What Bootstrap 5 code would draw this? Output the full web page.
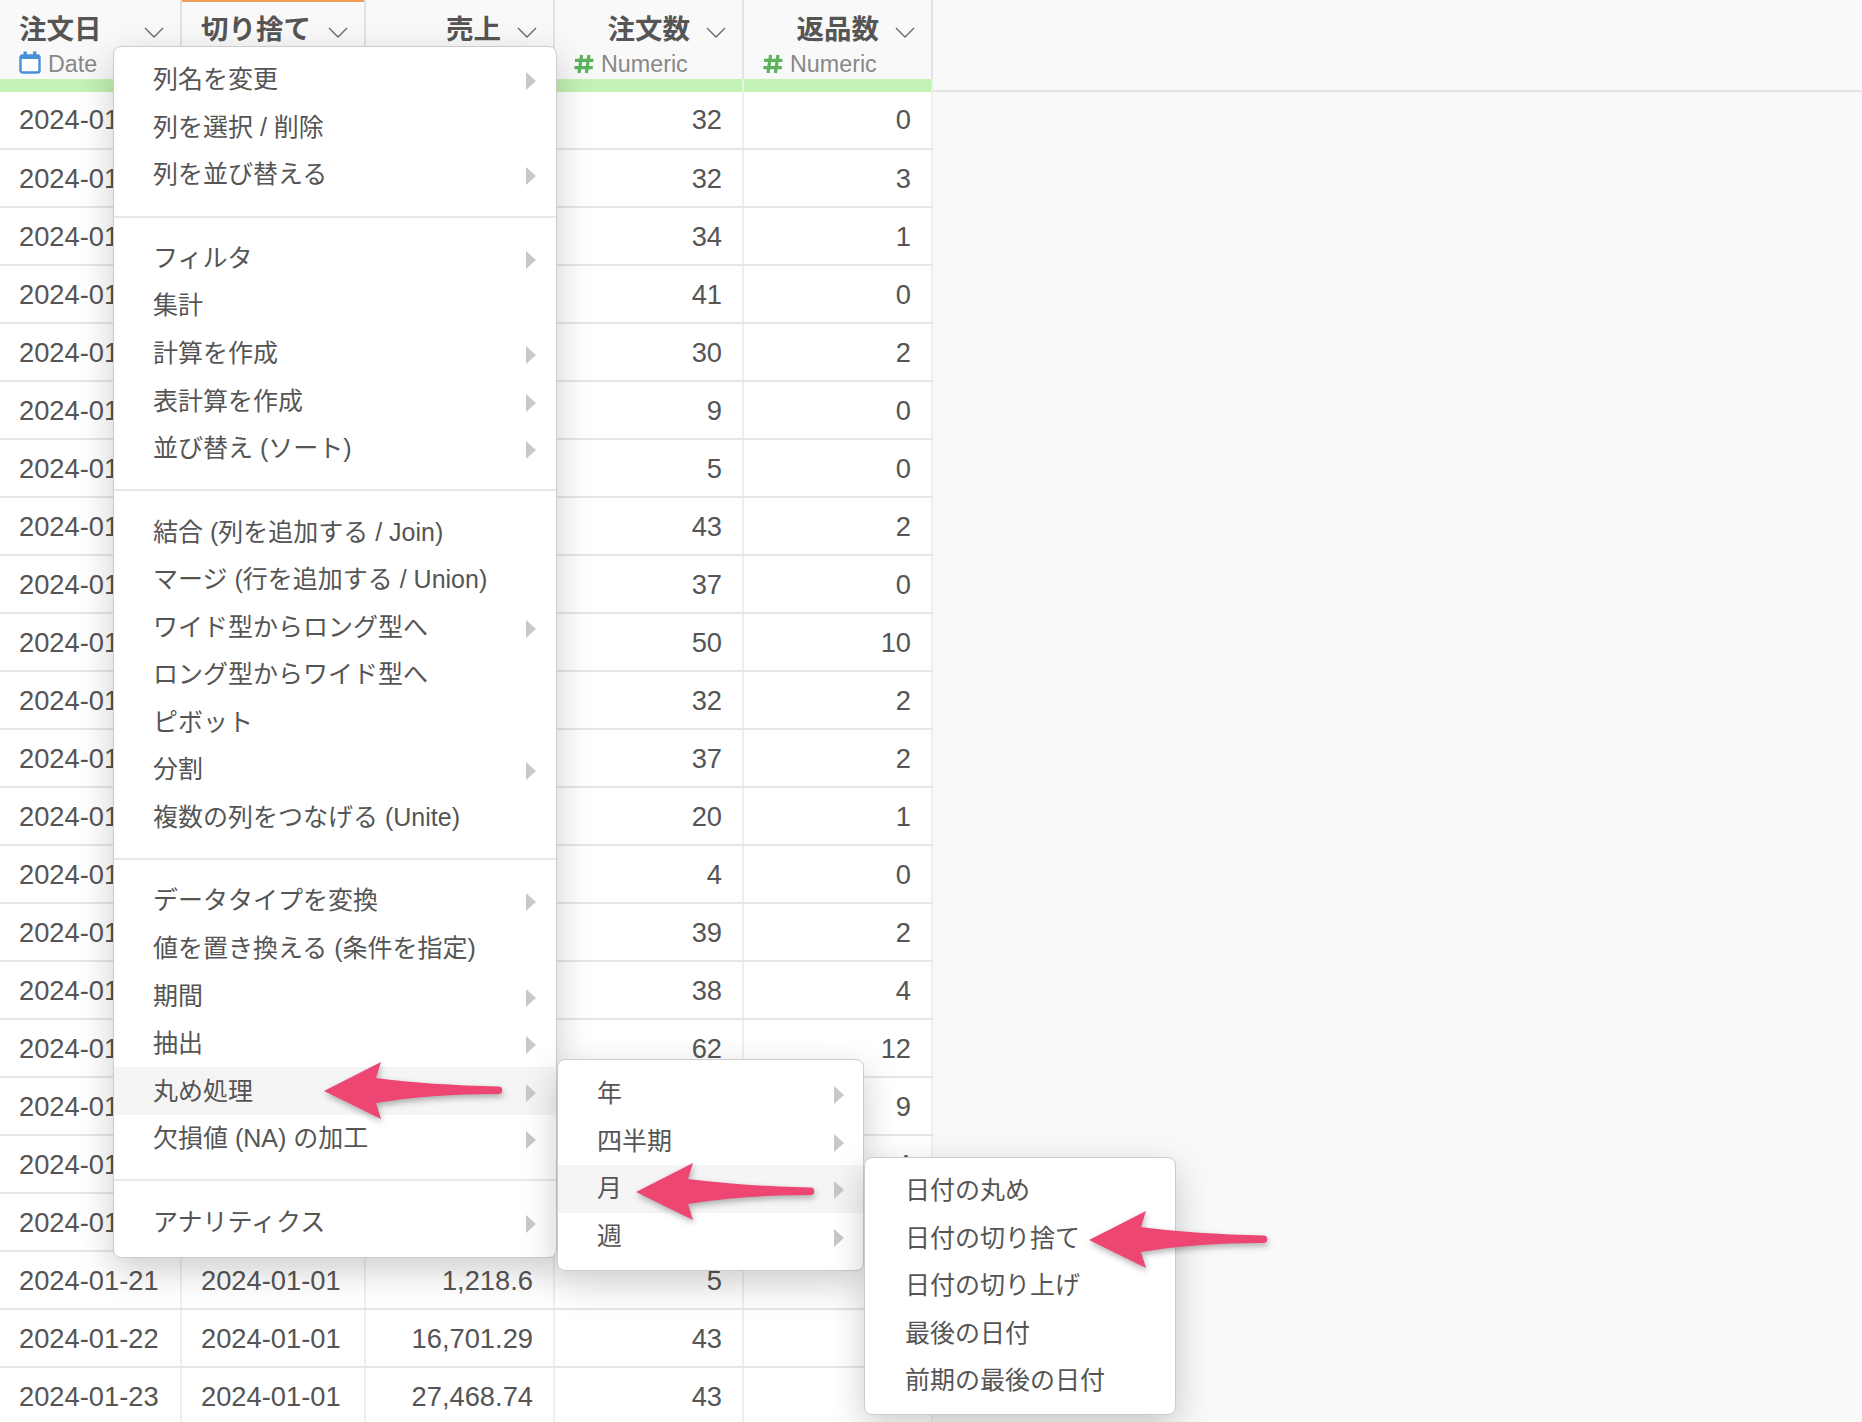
<!DOCTYPE html>
<html lang="ja">
<head>
<meta charset="utf-8">
<title>Data</title>
<link href="https://cdn.jsdelivr.net/npm/bootstrap@5.3.0/dist/css/bootstrap.min.css" rel="stylesheet">
<style>
html,body{height:1422px;overflow:hidden}
body{background:#f9f9f9;color:#555;font-family:"Liberation Sans","Noto Sans CJK JP",sans-serif;position:relative}
.grid-wrap{height:1422px;overflow:hidden}
.head-fill{height:92px;border-bottom:2px solid #e4e4e4}
.data-grid{width:932px;table-layout:fixed;flex:none;--bs-table-bg:#fff;--bs-table-color:#555;color:#555;border-right:2px solid #e2e2e2}
.data-grid col.c1{width:181px}.data-grid col.c2{width:184px}.data-grid col.c3{width:189px}.data-grid col.c4{width:189px}.data-grid col.c5{width:189px}
.data-grid td{height:58px;padding:1px 20px 0 19px;font-size:27.3px;line-height:30px;vertical-align:middle;white-space:nowrap;overflow:hidden;border-bottom:2px solid #e6e6e6;border-right:2px solid #efefef;color:#555}
.data-grid th{background:#f9f9f9;padding:0 16px 0 19px;height:79px;border-bottom:0;border-right:2px solid #e2e2e2;vertical-align:top;font-weight:700}
.data-grid td.green-bar{height:12px;padding:0;background:#c2f2b4;border-bottom:1px solid #c2f2b4;border-right:2px solid #e2f5dc}
th.sel-col{box-shadow:inset 0 2px 0 #ef9a55}
.col-title{font-size:27.5px;line-height:30px;margin-top:15px;color:#555;white-space:nowrap}
.col-type{font-size:23.3px;line-height:28px;margin-top:5px;font-weight:400;color:#888;white-space:nowrap}
.type-mark{width:27px;flex:none;display:flex;align-items:center}
.type-mark.for-date{width:29px}
.type-mark.for-date svg{margin-bottom:3px}
.chev{width:20px;height:11px;flex:none;margin-left:16px;margin-top:5px}
.tree-menu{display:block;position:absolute;margin:0;padding:9px 0 11px;background:#fff;border:1.5px solid #ccc;border-radius:8px;box-shadow:0 12px 36px rgba(0,0,0,.2);color:#555;font-size:25px;z-index:10}
.menu-main{left:113px;top:46px;width:444px}
.menu-sub1{left:557px;top:1059px;width:307px;padding:10px 0;z-index:11}
.menu-sub2{left:864px;top:1157px;width:312px;padding:9px 0;z-index:12}
.tree-menu .dropdown-item{height:47.55px;line-height:47px;padding:0 20px 0 39px;color:#555;font-size:25px;display:flex;justify-content:space-between;align-items:center;white-space:nowrap}
.menu-sub1 .dropdown-item{padding-left:39px;padding-right:19px}
.menu-sub2 .dropdown-item{padding-left:40px}
.tree-menu .dropdown-item.is-open{background:#f5f5f5}
.tree-menu .dropdown-divider{margin:17px 0;border-top:2px solid #e8e8e8;opacity:1}
.sub-caret{width:0;height:0;border-top:9.5px solid transparent;border-bottom:9.5px solid transparent;border-left:10px solid #c8c8c8;flex:none;margin-top:3px}
.call-arrow{position:absolute;width:188px;height:66px;z-index:20;filter:drop-shadow(1px 3px 3px rgba(0,0,0,.3))}
.arrow-a{left:320px;top:1058px}
.arrow-b{left:632px;top:1159px}
.arrow-c{left:1085px;top:1207px}
</style>
</head>
<body>
<svg width="0" height="0" class="d-none"><defs>
<symbol id="ic-chev" viewBox="0 0 20 11"><path d="M1 1l9 9 9-9" fill="none" stroke="#666" stroke-width="1.3"/></symbol>
<symbol id="ic-hash" viewBox="0 0 20 20"><path d="M7.6 1L5 19M15 1L12.4 19M1 6.4H19.4M.4 13.6H18.8" fill="none" stroke="#5cb35c" stroke-width="3.2"/></symbol>
<symbol id="ic-cal" viewBox="0 0 22 23"><rect x="1.5" y="4.5" width="19" height="17" rx="2" fill="#fff" stroke="#4a90d9" stroke-width="2.4"/><rect x="1.5" y="4" width="19" height="4" fill="#4a90d9"/><rect x="4.5" y="0.5" width="3.4" height="6" fill="#4a90d9"/><rect x="14" y="0.5" width="3.4" height="6" fill="#4a90d9"/></symbol>
</defs></svg>
<div class="grid-wrap d-flex align-items-start">
<table class="table mb-0 data-grid">
<colgroup><col class="c1"><col class="c2"><col class="c3"><col class="c4"><col class="c5"></colgroup>
<thead>
<tr>
<th><div class="col-title d-flex justify-content-between align-items-center"><span>注文日</span><svg class="chev"><use href="#ic-chev"/></svg></div><div class="col-type d-flex align-items-center"><span class="type-mark for-date"><svg width="22" height="23"><use href="#ic-cal"/></svg></span><span>Date</span></div></th>
<th class="sel-col"><div class="col-title d-flex justify-content-between align-items-center"><span>切り捨て</span><svg class="chev"><use href="#ic-chev"/></svg></div></th>
<th><div class="col-title d-flex justify-content-end align-items-center"><span>売上</span><svg class="chev"><use href="#ic-chev"/></svg></div></th>
<th><div class="col-title d-flex justify-content-end align-items-center"><span>注文数</span><svg class="chev"><use href="#ic-chev"/></svg></div><div class="col-type d-flex align-items-center"><span class="type-mark"><svg width="20" height="20"><use href="#ic-hash"/></svg></span><span>Numeric</span></div></th>
<th><div class="col-title d-flex justify-content-end align-items-center"><span>返品数</span><svg class="chev"><use href="#ic-chev"/></svg></div><div class="col-type d-flex align-items-center"><span class="type-mark"><svg width="20" height="20"><use href="#ic-hash"/></svg></span><span>Numeric</span></div></th>
</tr>
<tr><td class="green-bar"></td><td class="green-bar"></td><td class="green-bar"></td><td class="green-bar"></td><td class="green-bar"></td></tr>
</thead>
<tbody>
<tr><td>2024-01-01</td><td></td><td></td><td class="text-end">32</td><td class="text-end">0</td></tr>
<tr><td>2024-01-02</td><td></td><td></td><td class="text-end">32</td><td class="text-end">3</td></tr>
<tr><td>2024-01-03</td><td></td><td></td><td class="text-end">34</td><td class="text-end">1</td></tr>
<tr><td>2024-01-04</td><td></td><td></td><td class="text-end">41</td><td class="text-end">0</td></tr>
<tr><td>2024-01-05</td><td></td><td></td><td class="text-end">30</td><td class="text-end">2</td></tr>
<tr><td>2024-01-06</td><td></td><td></td><td class="text-end">9</td><td class="text-end">0</td></tr>
<tr><td>2024-01-07</td><td></td><td></td><td class="text-end">5</td><td class="text-end">0</td></tr>
<tr><td>2024-01-08</td><td></td><td></td><td class="text-end">43</td><td class="text-end">2</td></tr>
<tr><td>2024-01-09</td><td></td><td></td><td class="text-end">37</td><td class="text-end">0</td></tr>
<tr><td>2024-01-10</td><td></td><td></td><td class="text-end">50</td><td class="text-end">10</td></tr>
<tr><td>2024-01-11</td><td></td><td></td><td class="text-end">32</td><td class="text-end">2</td></tr>
<tr><td>2024-01-12</td><td></td><td></td><td class="text-end">37</td><td class="text-end">2</td></tr>
<tr><td>2024-01-13</td><td></td><td></td><td class="text-end">20</td><td class="text-end">1</td></tr>
<tr><td>2024-01-14</td><td></td><td></td><td class="text-end">4</td><td class="text-end">0</td></tr>
<tr><td>2024-01-15</td><td></td><td></td><td class="text-end">39</td><td class="text-end">2</td></tr>
<tr><td>2024-01-16</td><td></td><td></td><td class="text-end">38</td><td class="text-end">4</td></tr>
<tr><td>2024-01-17</td><td></td><td></td><td class="text-end">62</td><td class="text-end">12</td></tr>
<tr><td>2024-01-18</td><td></td><td></td><td class="text-end"></td><td class="text-end">9</td></tr>
<tr><td>2024-01-19</td><td></td><td></td><td class="text-end"></td><td class="text-end">4</td></tr>
<tr><td>2024-01-20</td><td></td><td></td><td class="text-end"></td><td class="text-end"></td></tr>
<tr><td>2024-01-21</td><td>2024-01-01</td><td class="text-end">1,218.6</td><td class="text-end">5</td><td class="text-end"></td></tr>
<tr><td>2024-01-22</td><td>2024-01-01</td><td class="text-end">16,701.29</td><td class="text-end">43</td><td class="text-end"></td></tr>
<tr><td>2024-01-23</td><td>2024-01-01</td><td class="text-end">27,468.74</td><td class="text-end">43</td><td class="text-end"></td></tr>
</tbody>
</table>
<div class="head-fill flex-grow-1"></div>
</div>

<ul class="dropdown-menu tree-menu menu-main list-unstyled">
<li><a class="dropdown-item" href="#"><span>列名を変更</span><i class="sub-caret"></i></a></li>
<li><a class="dropdown-item" href="#"><span>列を選択 / 削除</span></a></li>
<li><a class="dropdown-item" href="#"><span>列を並び替える</span><i class="sub-caret"></i></a></li>
<li><hr class="dropdown-divider"></li>
<li><a class="dropdown-item" href="#"><span>フィルタ</span><i class="sub-caret"></i></a></li>
<li><a class="dropdown-item" href="#"><span>集計</span></a></li>
<li><a class="dropdown-item" href="#"><span>計算を作成</span><i class="sub-caret"></i></a></li>
<li><a class="dropdown-item" href="#"><span>表計算を作成</span><i class="sub-caret"></i></a></li>
<li><a class="dropdown-item" href="#"><span>並び替え (ソート)</span><i class="sub-caret"></i></a></li>
<li><hr class="dropdown-divider"></li>
<li><a class="dropdown-item" href="#"><span>結合 (列を追加する / Join)</span></a></li>
<li><a class="dropdown-item" href="#"><span>マージ (行を追加する / Union)</span></a></li>
<li><a class="dropdown-item" href="#"><span>ワイド型からロング型へ</span><i class="sub-caret"></i></a></li>
<li><a class="dropdown-item" href="#"><span>ロング型からワイド型へ</span></a></li>
<li><a class="dropdown-item" href="#"><span>ピボット</span></a></li>
<li><a class="dropdown-item" href="#"><span>分割</span><i class="sub-caret"></i></a></li>
<li><a class="dropdown-item" href="#"><span>複数の列をつなげる (Unite)</span></a></li>
<li><hr class="dropdown-divider"></li>
<li><a class="dropdown-item" href="#"><span>データタイプを変換</span><i class="sub-caret"></i></a></li>
<li><a class="dropdown-item" href="#"><span>値を置き換える (条件を指定)</span></a></li>
<li><a class="dropdown-item" href="#"><span>期間</span><i class="sub-caret"></i></a></li>
<li><a class="dropdown-item" href="#"><span>抽出</span><i class="sub-caret"></i></a></li>
<li><a class="dropdown-item is-open" href="#"><span>丸め処理</span><i class="sub-caret"></i></a></li>
<li><a class="dropdown-item" href="#"><span>欠損値 (NA) の加工</span><i class="sub-caret"></i></a></li>
<li><hr class="dropdown-divider"></li>
<li><a class="dropdown-item" href="#"><span>アナリティクス</span><i class="sub-caret"></i></a></li>
</ul>

<ul class="dropdown-menu tree-menu menu-sub1 list-unstyled">
<li><a class="dropdown-item" href="#"><span>年</span><i class="sub-caret"></i></a></li>
<li><a class="dropdown-item" href="#"><span>四半期</span><i class="sub-caret"></i></a></li>
<li><a class="dropdown-item is-open" href="#"><span>月</span><i class="sub-caret"></i></a></li>
<li><a class="dropdown-item" href="#"><span>週</span><i class="sub-caret"></i></a></li>
</ul>

<ul class="dropdown-menu tree-menu menu-sub2 list-unstyled">
<li><a class="dropdown-item" href="#"><span>日付の丸め</span></a></li>
<li><a class="dropdown-item" href="#"><span>日付の切り捨て</span></a></li>
<li><a class="dropdown-item" href="#"><span>日付の切り上げ</span></a></li>
<li><a class="dropdown-item" href="#"><span>最後の日付</span></a></li>
<li><a class="dropdown-item" href="#"><span>前期の最後の日付</span></a></li>
</ul>

<svg class="call-arrow arrow-a" viewBox="0 0 188 66"><path d="M4 33L61 4 56 20Q110 27 178.5 28.5A3.6 3.6 0 0 1 178.5 36Q110 36 56 45L61 61Z" fill="#ee4672"/></svg>
<svg class="call-arrow arrow-b" viewBox="0 0 188 66"><path d="M4 33L61 4 56 20Q110 27 178.5 28.5A3.6 3.6 0 0 1 178.5 36Q110 36 56 45L61 61Z" fill="#ee4672"/></svg>
<svg class="call-arrow arrow-c" viewBox="0 0 188 66"><path d="M4 33L61 4 56 20Q110 27 178.5 28.5A3.6 3.6 0 0 1 178.5 36Q110 36 56 45L61 61Z" fill="#ee4672"/></svg>

<script src="https://cdn.jsdelivr.net/npm/bootstrap@5.3.0/dist/js/bootstrap.bundle.min.js"></script>
</body>
</html>
